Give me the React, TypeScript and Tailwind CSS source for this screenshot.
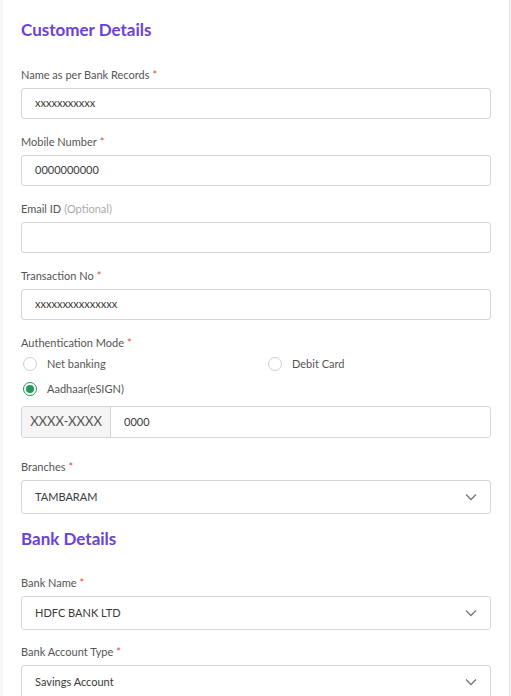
import React from "react";

const font = { fontFamily: "Lato, 'Open Sans', sans-serif" };

function Label({ text, required = true, optional = false }: { text: string; required?: boolean; optional?: boolean }) {
  return (
    <div className="h-4 leading-4 text-[11px] text-[#555]">
      {text}
      {required && <span className="text-[#e74c3c] ml-[3px]">*</span>}
      {optional && <span className="text-[#aaa] ml-[3px]">(Optional)</span>}
    </div>
  );
}

function Input({ value }: { value: string }) {
  return (
    <div className="mt-[5px] h-[31px] border border-[#d6d6d6] rounded-[3px] flex items-center pl-[13px] text-[11px] text-[#3a3a3a]">
      {value}
    </div>
  );
}

function Chevron() {
  return (
    <svg width="12" height="8" viewBox="0 0 12 8" fill="none">
      <path d="M1 1.5 L6 6.5 L11 1.5" stroke="#777" strokeWidth="1.3" />
    </svg>
  );
}

function Select({ value }: { value: string }) {
  return (
    <div className="mt-[5px] h-[34px] border border-[#d6d6d6] rounded-[3px] flex items-center justify-between pl-[13px] pr-[13px] text-[11px] text-[#3a3a3a]">
      <span>{value}</span>
      <Chevron />
    </div>
  );
}

function Radio({ label, checked = false }: { label: string; checked?: boolean }) {
  return (
    <div className="flex items-center h-5 text-[11px] text-[#555]">
      <div
        className={
          checked
            ? "ml-[2px] w-[14px] h-[14px] rounded-full border border-[#1f9d55] flex items-center justify-center"
            : "ml-[2px] w-[14px] h-[14px] rounded-full border border-[#d0d0d0]"
        }
      >
        {checked && <div className="w-[8px] h-[8px] rounded-full bg-[#1f9d55]" />}
      </div>
      <span className="ml-[10px]">{label}</span>
    </div>
  );
}

export default function App() {
  return (
    <div className="flex w-[511px] h-[696px] overflow-hidden bg-[#f7f7f7]" style={font}>
      <div className="w-[3px] bg-[#f7f7f7]" />
      <div className="flex-1 bg-white border-r border-[#e2e2e2] px-[18px] pt-[18px]">
        <h2 className="text-[17px] leading-6 font-bold text-[#6a42d8]">Customer Details</h2>

        <div className="mt-[25px]">
          <Label text="Name as per Bank Records" />
          <Input value="xxxxxxxxxxx" />
        </div>
        <div className="mt-[15px]">
          <Label text="Mobile Number" />
          <Input value="0000000000" />
        </div>
        <div className="mt-[15px]">
          <Label text="Email ID" required={false} optional />
          <Input value="" />
        </div>
        <div className="mt-[15px]">
          <Label text="Transaction No" />
          <Input value="xxxxxxxxxxxxxxx" />
        </div>

        <div className="mt-[15px]">
          <Label text="Authentication Mode" />
          <div className="mt-[3px] grid grid-cols-[245px_1fr]">
            <Radio label="Net banking" />
            <Radio label="Debit Card" />
          </div>
          <div className="mt-[5px]">
            <Radio label="Aadhaar(eSIGN)" checked />
          </div>
          <div className="mt-[7px] h-[32px] border border-[#d6d6d6] rounded-[3px] flex overflow-hidden">
            <div className="w-[89px] bg-[#f5f5f5] border-r border-[#d6d6d6] flex items-center justify-center text-[13px] text-[#555]">
              XXXX-XXXX
            </div>
            <div className="flex items-center pl-[13px] text-[11px] text-[#3a3a3a]">0000</div>
          </div>
        </div>

        <div className="mt-[21px]">
          <Label text="Branches" />
          <Select value="TAMBARAM" />
        </div>

        <h2 className="mt-[13px] text-[17px] leading-6 font-bold text-[#6a42d8]">Bank Details</h2>

        <div className="mt-[24px]">
          <Label text="Bank Name" />
          <Select value="HDFC BANK LTD" />
        </div>
        <div className="mt-[14px]">
          <Label text="Bank Account Type" />
          <Select value="Savings Account" />
        </div>
      </div>
      <div className="w-[1px] bg-[#f7f7f7]" />
    </div>
  );
}
